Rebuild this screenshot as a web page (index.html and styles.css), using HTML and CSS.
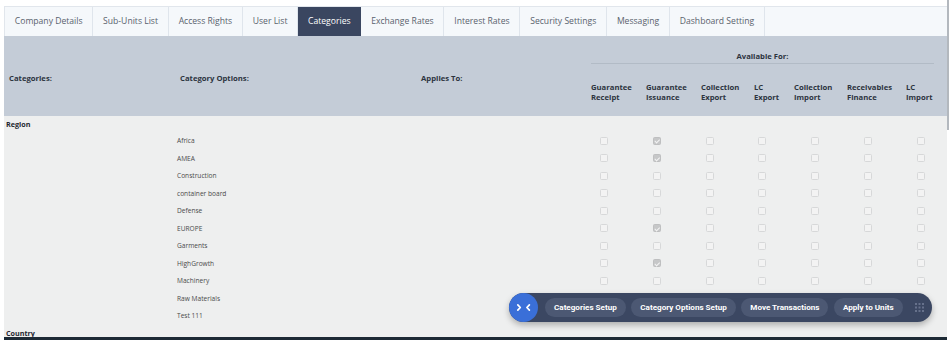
FILE: index.html
```html
<!DOCTYPE html>
<html>
	<head>
		<meta charset="UTF-8">
		<title>Categories</title>
		<link rel="stylesheet" href="styles.css">
	</head>
	<body>
		<div id="page">
			<div id="panel">
				<ul id="tabs">
					<li>Company Details</li>
					<li>Sub-Units List</li>
					<li>Access Rights</li>
					<li>User List</li>
					<li class="active">Categories</li>
					<li>Exchange Rates</li>
					<li>Interest Rates</li>
					<li>Security Settings</li>
					<li>Messaging</li>
					<li>Dashboard Setting</li>
				</ul>
				<div id="head">
					<div class="hcell c1">Categories:</div>
					<div class="hcell c2">Category Options:</div>
					<div class="hcell c3">Applies To:</div>
					<div class="avail">
						<div class="availTitle">Available For:</div>
						<div class="availCols">
							<span class="w55">Guarantee<br>Receipt</span>
							<span class="w55">Guarantee<br>Issuance</span>
							<span class="w53">Collection<br>Export</span>
							<span class="w40">LC<br>Export</span>
							<span class="w53">Collection<br>Import</span>
							<span class="w59">Receivables<br>Finance</span>
							<span>LC<br>Import</span>
						</div>
					</div>
				</div>
				<div id="body">
					<div class="group">Region</div>
					<div class="row"><span class="opt">Africa</span><i class="chk"></i><i class="chk on"></i><i class="chk"></i><i class="chk"></i><i class="chk"></i><i class="chk"></i><i class="chk"></i></div>
					<div class="row"><span class="opt">AMEA</span><i class="chk"></i><i class="chk on"></i><i class="chk"></i><i class="chk"></i><i class="chk"></i><i class="chk"></i><i class="chk"></i></div>
					<div class="row"><span class="opt">Construction</span><i class="chk"></i><i class="chk"></i><i class="chk"></i><i class="chk"></i><i class="chk"></i><i class="chk"></i><i class="chk"></i></div>
					<div class="row"><span class="opt">container board</span><i class="chk"></i><i class="chk"></i><i class="chk"></i><i class="chk"></i><i class="chk"></i><i class="chk"></i><i class="chk"></i></div>
					<div class="row"><span class="opt">Defense</span><i class="chk"></i><i class="chk"></i><i class="chk"></i><i class="chk"></i><i class="chk"></i><i class="chk"></i><i class="chk"></i></div>
					<div class="row"><span class="opt">EUROPE</span><i class="chk"></i><i class="chk on"></i><i class="chk"></i><i class="chk"></i><i class="chk"></i><i class="chk"></i><i class="chk"></i></div>
					<div class="row"><span class="opt">Garments</span><i class="chk"></i><i class="chk"></i><i class="chk"></i><i class="chk"></i><i class="chk"></i><i class="chk"></i><i class="chk"></i></div>
					<div class="row"><span class="opt">HighGrowth</span><i class="chk"></i><i class="chk on"></i><i class="chk"></i><i class="chk"></i><i class="chk"></i><i class="chk"></i><i class="chk"></i></div>
					<div class="row"><span class="opt">Machinery</span><i class="chk"></i><i class="chk"></i><i class="chk"></i><i class="chk"></i><i class="chk"></i><i class="chk"></i><i class="chk"></i></div>
					<div class="row"><span class="opt">Raw Materials</span><i class="chk"></i><i class="chk"></i><i class="chk"></i><i class="chk"></i><i class="chk"></i><i class="chk"></i><i class="chk"></i></div>
					<div class="row"><span class="opt">Test 111</span><i class="chk"></i><i class="chk"></i><i class="chk"></i><i class="chk"></i><i class="chk"></i><i class="chk"></i><i class="chk"></i></div>
					<div class="group">Country</div>
				</div>
				<!-- floating action bar -->
				<div id="toolbar">
					<span class="toggle">
						<svg width="29" height="29" viewBox="0 0 29 29"><polyline points="8.8,11.8 11.3,14.5 8.8,17.2" fill="none" stroke="#fff" stroke-width="1.7" stroke-linecap="round" stroke-linejoin="round"/><polyline points="20.4,11.8 17.9,14.5 20.4,17.2" fill="none" stroke="#fff" stroke-width="1.7" stroke-linecap="round" stroke-linejoin="round"/></svg>
					</span>
					<a href="javascript:;" class="btn">Categories Setup</a>
					<a href="javascript:;" class="btn">Category Options Setup</a>
					<a href="javascript:;" class="btn">Move Transactions</a>
					<a href="javascript:;" class="btn">Apply to Units</a>
					<span class="grip">
						<svg width="9" height="9" viewBox="0 0 9 9" fill="#66718b"><rect x="0" y="0" width="2" height="2"/><rect x="3.5" y="0" width="2" height="2"/><rect x="7" y="0" width="2" height="2"/><rect x="0" y="3.5" width="2" height="2"/><rect x="3.5" y="3.5" width="2" height="2"/><rect x="7" y="3.5" width="2" height="2"/><rect x="0" y="7" width="2" height="2"/><rect x="3.5" y="7" width="2" height="2"/><rect x="7" y="7" width="2" height="2"/></svg>
					</span>
				</div>
			</div>
			<div id="scroll"></div>
		</div>
	</body>
</html>
```

FILE: styles.css
```css
html,body{
	margin: 0;
	background: #fff;
}
body{
	font-family: "Open Sans", "Liberation Sans", sans-serif;
}
ul,li{
	margin: 0;
	padding: 0;
	list-style: none;
}
a{
	text-decoration: none;
}
#page{
	display: flex;
	align-items: flex-start;
	padding-left: 4px;
}
#panel{
	position: relative;
	width: 943px;
	height: 334px;
	margin-top: 6px;
	box-sizing: border-box;
	border-bottom: 3px solid #1d2a35;
	display: flex;
	flex-direction: column;
}
#scroll{
	width: 2px;
	height: 130px;
	background: #b3b8be;
}

/* tabs */
#tabs{
	display: flex;
	height: 30px;
	flex-shrink: 0;
	box-sizing: border-box;
	background: #f5f8fb;
	border-top: 1px solid #e1e6ec;
	border-left: 1px solid #e1e6ec;
}
#tabs li{
	padding: 0 9.8px;
	font-size: 8.6px;
	line-height: 29px;
	color: #59626d;
	border-right: 1px solid #dfe5ec;
	white-space: nowrap;
}
#tabs li.active{
	background: #3a4660;
	border-right-color: #3a4660;
	color: #fff;
}

/* header */
#head{
	display: flex;
	height: 80px;
	flex-shrink: 0;
	background: #c4ccd7;
	font-weight: bold;
	font-size: 7.7px;
	color: #2d343f;
}
.hcell{
	align-self: center;
	padding-top: 3px;
	box-sizing: border-box;
}
.c1{
	width: 173px;
	padding-left: 5px;
}
.c2{
	width: 244px;
	padding-left: 3px;
}
.c3{
	width: 170px;
}
.avail{
	width: 343px;
	padding-top: 15px;
}
.availTitle{
	text-align: center;
	line-height: 10px;
	padding-bottom: 2px;
	border-bottom: 1px solid #b2bbc6;
}
.availCols{
	display: flex;
	margin-top: 19px;
	line-height: 9.5px;
}
.w55{ width: 55px; }
.w53{ width: 53px; }
.w40{ width: 40px; }
.w59{ width: 59px; }

/* body rows */
#body{
	flex: 1;
	overflow: hidden;
	background: #eeefef;
}
.group{
	height: 16px;
	line-height: 16px;
	padding-left: 2px;
	font-weight: bold;
	font-size: 7.2px;
	color: #1e2731;
}
.row{
	display: grid;
	grid-template-columns: 401px repeat(7, 1fr);
	align-items: center;
	height: 17.5px;
	padding-left: 173px;
}
.opt{
	font-size: 6.6px;
	color: #4a4a4a;
}
.chk{
	display: block;
	justify-self: center;
	width: 6px;
	height: 6px;
	border: 1px solid #d7d8d9;
	border-radius: 1.5px;
	background: #f3f3f3;
	position: relative;
}
.chk.on{
	background: #c6c7c8;
	border-color: #bebfc0;
}
.chk.on:after{
	content: "";
	position: absolute;
	left: 2px;
	top: 0.5px;
	width: 1.5px;
	height: 3.5px;
	border-right: 1px solid #f4f4f4;
	border-bottom: 1px solid #f4f4f4;
	transform: rotate(45deg);
}

/* action bar */
#toolbar{
	position: absolute;
	left: 505px;
	top: 287px;
	width: 423px;
	height: 29px;
	border-radius: 15px;
	background: #3b4762;
	box-shadow: 0 3px 6px rgba(0,0,0,0.28);
	display: flex;
	align-items: center;
	gap: 5.5px;
}
.toggle{
	width: 29px;
	height: 29px;
	border-radius: 50%;
	background: #3a6fd8;
	margin-right: 1.5px;
	display: flex;
}
.btn{
	height: 19.5px;
	padding: 0 9px;
	border-radius: 10px;
	background: #4c5873;
	color: #fff;
	font: bold 8.1px "Roboto", "Liberation Sans", sans-serif;
	line-height: 19.5px;
	white-space: nowrap;
}
.grip{
	margin-left: 7px;
	display: flex;
}
```
